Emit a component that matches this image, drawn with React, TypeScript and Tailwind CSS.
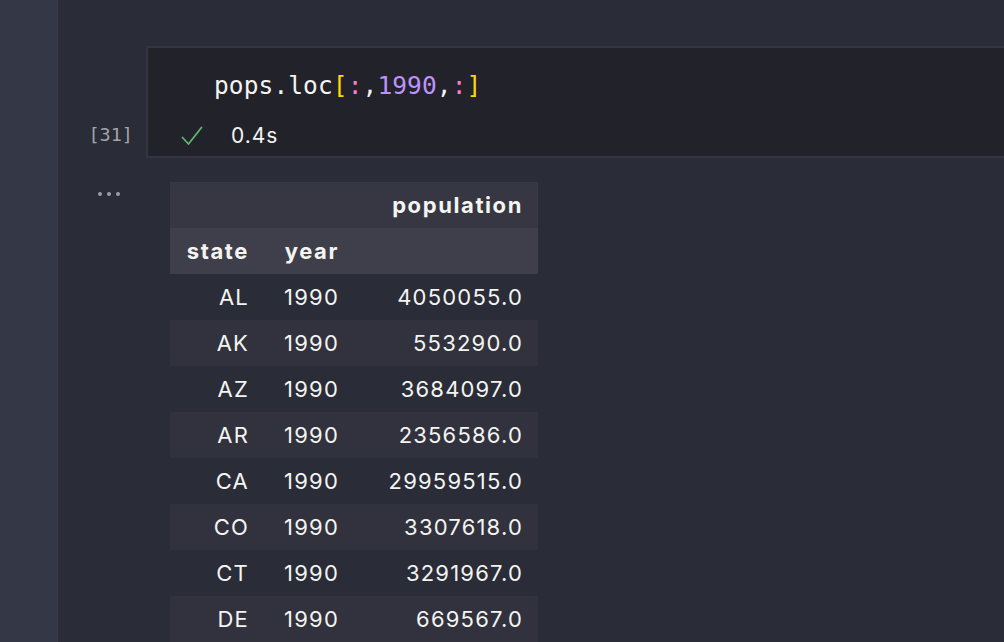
import React from "react";

const rows: [string, string, string][] = [
  ["AL", "1990", "4050055.0"],
  ["AK", "1990", "553290.0"],
  ["AZ", "1990", "3684097.0"],
  ["AR", "1990", "2356586.0"],
  ["CA", "1990", "29959515.0"],
  ["CO", "1990", "3307618.0"],
  ["CT", "1990", "3291967.0"],
  ["DE", "1990", "669567.0"],
];

const mono = { fontFamily: '"DejaVu Sans Mono", "Liberation Mono", monospace' };
const sans = { fontFamily: 'Inter, "Noto Sans", "Liberation Sans", sans-serif' };

function Check() {
  return (
    <svg width="22" height="20" viewBox="0 0 22 20" fill="none" className="shrink-0">
      <path d="M1.5 11.5 L7.5 18 L20.5 1.5" stroke="#5fb66c" strokeWidth="1.8" strokeLinecap="round" strokeLinejoin="round" />
    </svg>
  );
}

export default function App() {
  return (
    <div className="flex h-[642px] w-[1004px] overflow-hidden bg-[#2a2c38]" style={sans}>
      {/* activity strip */}
      <div className="w-[58px] shrink-0 bg-[#343746]" />

      <div className="flex min-w-0 flex-1 flex-col pt-[46px]">
        {/* input cell */}
        <div className="flex">
          <div className="flex w-[88px] shrink-0 flex-col items-end justify-end pb-[12px] pr-[13px]">
            <span className="text-[18.5px] leading-[22px] text-[#a3a4a8]" style={mono}>
              [31]
            </span>
          </div>
          <div className="-mr-[20px] flex-1 border-2 border-r-0 border-[#343542] bg-[#22222b] pb-[6px] pt-[24px]">
            <div className="pl-[66px] text-[24.5px] leading-[28px] tracking-[0.1px] text-[#f4f4f0]" style={mono}>
              pops.loc
              <span className="text-[#ffd60a]">[</span>
              <span className="text-[#ff79c6]">:</span>,
              <span className="text-[#bd93f9]">1990</span>,
              <span className="text-[#ff79c6]">:</span>
              <span className="text-[#ffd60a]">]</span>
            </div>
            <div className="mt-[22px] flex h-[28px] items-center gap-[28px] pl-[33px]">
              <Check />
              <span className="text-[21px] tracking-[1px] text-[#f4f4f0]">0.4s</span>
            </div>
          </div>
        </div>

        {/* output */}
        <div className="mt-[24px] flex">
          <div className="flex w-[88px] shrink-0 justify-center gap-[5px] pl-[14px] pt-[10px]">
            <span className="h-[4px] w-[4px] rounded-full bg-[#9d9ea3]" />
            <span className="h-[4px] w-[4px] rounded-full bg-[#9d9ea3]" />
            <span className="h-[4px] w-[4px] rounded-full bg-[#9d9ea3]" />
          </div>
          <div className="pl-[24px]">
            <table className="border-collapse text-right text-[22px] tracking-[1.2px] text-[#f4f4f0]">
              <thead className="font-bold tracking-[1.6px]">
                <tr className="h-[46px] bg-[#363742]">
                  <th className="w-[94px] pr-[15px]" />
                  <th className="w-[90px] pr-[15px]" />
                  <th className="w-[184px] pr-[15px] text-right">population</th>
                </tr>
                <tr className="h-[46px] bg-[#3e3f4a]">
                  <th className="pr-[15px] text-right">state</th>
                  <th className="pr-[15px] text-right">year</th>
                  <th className="pr-[15px]" />
                </tr>
              </thead>
              <tbody>
                {rows.map(([s, y, p], i) => (
                  <tr key={s} className={i % 2 === 1 ? "h-[46px] bg-[#31323e]" : "h-[46px] bg-[#2a2c38]"}>
                    <td className="pr-[15px]">{s}</td>
                    <td className="pr-[15px]">{y}</td>
                    <td className="pr-[15px]">{p}</td>
                  </tr>
                ))}
              </tbody>
            </table>
          </div>
        </div>
      </div>
    </div>
  );
}
